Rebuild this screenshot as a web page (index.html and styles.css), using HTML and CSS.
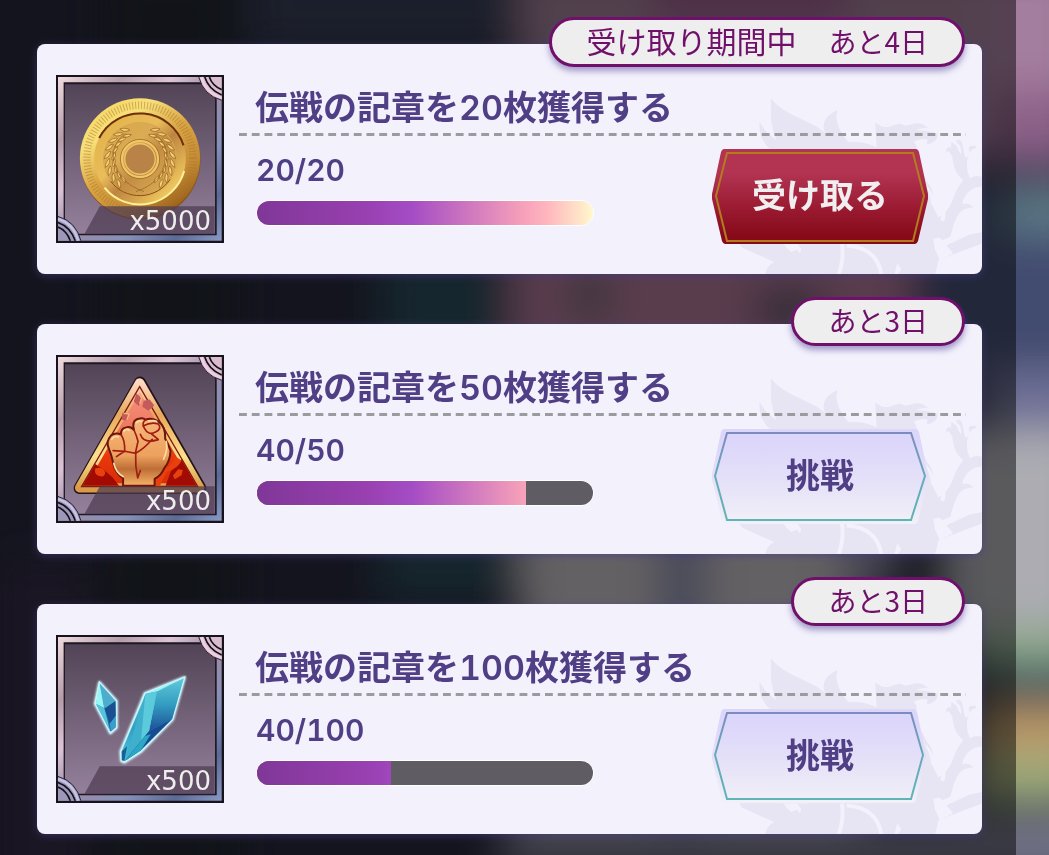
FILE: index.html
```html
<!DOCTYPE html>
<html lang="ja">
<head>
  <meta charset="UTF-8">
  <meta name="viewport" content="width=device-width, initial-scale=1.0">
  <title>ミッション</title>
  <link rel="stylesheet" href="styles.css">
</head>
<body>
  <!-- shared drawings -->
  <svg class="defs" width="0" height="0" aria-hidden="true">
    <defs>
      <linearGradient id="tile" x1="0" y1="0" x2="0" y2="1">
        <stop offset="0" stop-color="#524456"/><stop offset="1" stop-color="#94809b"/>
      </linearGradient>
      <linearGradient id="metal" x1="0" y1="0" x2="1" y2="1">
        <stop offset="0" stop-color="#f0dcdf"/><stop offset=".2" stop-color="#b59caa"/><stop offset=".35" stop-color="#dcc4d6"/>
        <stop offset=".5" stop-color="#9d8ba6"/><stop offset=".7" stop-color="#8590b8"/><stop offset=".85" stop-color="#5c6b96"/><stop offset="1" stop-color="#8799c4"/>
      </linearGradient>
      <linearGradient id="gold" x1=".1" y1="0" x2=".8" y2="1">
        <stop offset="0" stop-color="#f6d35c"/><stop offset=".25" stop-color="#f7e07a"/><stop offset=".5" stop-color="#d9a443"/><stop offset=".75" stop-color="#c58c35"/><stop offset="1" stop-color="#8f5514"/>
      </linearGradient>
      <linearGradient id="goldIn" x1="0" y1="0" x2="1" y2="1">
        <stop offset="0" stop-color="#e2b045"/><stop offset=".4" stop-color="#e9bd5b"/><stop offset=".55" stop-color="#bd8440"/><stop offset=".8" stop-color="#e7bc58"/><stop offset="1" stop-color="#fff09a"/>
      </linearGradient>
      <linearGradient id="rim" x1="0" y1="0" x2="0" y2="1">
        <stop offset="0" stop-color="#ffd8c0"/><stop offset=".3" stop-color="#e9a85a"/><stop offset=".7" stop-color="#ffe08c"/><stop offset="1" stop-color="#d99b48"/>
      </linearGradient>
      <linearGradient id="fire" x1="0" y1="0" x2="0" y2="1">
        <stop offset="0" stop-color="#f49a86"/><stop offset=".4" stop-color="#f07a62"/><stop offset=".7" stop-color="#e8380c"/><stop offset="1" stop-color="#d82c08"/>
      </linearGradient>
      <linearGradient id="skin" x1="0" y1="0" x2="0" y2="1">
        <stop offset="0" stop-color="#f7b67c"/><stop offset=".55" stop-color="#eda25e"/><stop offset=".75" stop-color="#bd6e36"/><stop offset="1" stop-color="#f6b468"/>
      </linearGradient>
      <linearGradient id="ice" x1="0" y1="0" x2="0" y2="1">
        <stop offset="0" stop-color="#66d6e4"/><stop offset=".6" stop-color="#319fc4"/><stop offset="1" stop-color="#4cc4d8"/>
      </linearGradient>
      <linearGradient id="deep" x1="0" y1="0" x2="0" y2="1">
        <stop offset="0" stop-color="#5fcadd"/><stop offset=".5" stop-color="#339cc0"/><stop offset="1" stop-color="#1c4e98"/>
      </linearGradient>
      <linearGradient id="red" x1="0" y1="0" x2="0" y2="1">
        <stop offset=".25" stop-color="#b23452"/><stop offset=".6" stop-color="#9c1c34"/><stop offset=".92" stop-color="#860a18"/>
      </linearGradient>
      <linearGradient id="pale" x1="0" y1="0" x2="0" y2="1">
        <stop offset=".15" stop-color="#dcd6fa"/><stop offset=".55" stop-color="#e5e1f8"/><stop offset="1" stop-color="#f2f0f8"/>
      </linearGradient>
      <linearGradient id="edge" x1="0" y1="0" x2="0" y2="1">
        <stop offset="0" stop-color="#7c8cc0"/><stop offset=".5" stop-color="#68aaba"/><stop offset="1" stop-color="#5fb4b4"/>
      </linearGradient>
      <filter id="soft" x="-20%" y="-20%" width="140%" height="140%"><feGaussianBlur stdDeviation="4"/></filter>
      <filter id="haze" x="-30%" y="-30%" width="160%" height="160%"><feGaussianBlur stdDeviation="20"/></filter>
    </defs>

    <symbol id="frame" viewBox="48 46 506 506">
      <path d="M48 46h506v506H48z" fill="#17121b"/>
      <path d="M54 52h493v493H54z" fill="url(#metal)"/>
      <path d="M71 68h461v461H71z" fill="#1d1722"/>
      <path d="M75 74h452v450H75z" fill="url(#tile)"/>
    </symbol>
    <symbol id="corners" viewBox="48 46 506 506">
      <path d="M133 526l47-85h346v85z" fill="#4d3c52" fill-opacity=".72"/>
      <path d="M478 52q14 55 69 70V52z" fill="#d9bccf"/>
      <path d="M486 52q13 48 61 63" fill="none" stroke="#efcfe4" stroke-width="8"/>
      <path d="M478 52q14 55 69 70" fill="none" stroke="#2a2130" stroke-width="3"/>
      <path d="M496 52q12 38 51 54M510 52q8 26 37 38" fill="none" stroke="#151018" stroke-width="5"/>
      <path d="M54 472q54 15 69 73H54z" fill="#9d98ba"/>
      <path d="M54 480q46 13 61 65" fill="none" stroke="#c5c2e4" stroke-width="8"/>
      <path d="M54 472q54 15 69 73" fill="none" stroke="#2a2130" stroke-width="3"/>
      <path d="M54 490q37 13 52 55M54 504q26 11 37 41" fill="none" stroke="#151018" stroke-width="5"/>
    </symbol>

    <symbol id="griffin" viewBox="120 200 726 532">
      <g fill="#e7e5f3">
        <path d="M213 204C240 244 300 262 352 290L376 308C362 284 375 256 411 239C406 270 414 290 424 306C438 330 452 340 460 360H215C190 340 176 320 178 273C190 300 208 314 230 331C212 293 210 250 213 204z"/>
        <path d="M440 336Q490 330 530 352L526 276Q540 292 566 290Q582 284 602 280Q612 290 634 282Q664 272 684 293Q660 292 648 300Q680 300 713 310Q716 336 680 343L684 328Q660 322 642 334Q656 350 646 372L630 374Q662 410 682 456Q700 474 700 502Q692 470 674 462Q690 486 694 520L716 562Q740 550 756 516Q766 480 790 450Q764 430 760 394Q758 374 748 366Q738 358 736 374Q738 346 754 352L754 336Q770 340 776 360L786 374L782 348Q774 340 768 332Q782 322 788 342Q792 366 796 382Q816 376 806 350Q828 342 830 352Q804 360 802 392Q800 430 812 444Q826 434 846 440V470Q826 468 808 484Q790 500 788 522Q806 516 820 532Q790 532 776 552Q760 580 752 620L704 640L706 662L808 614L846 606V640L716 690L706 732H196Q200 706 222 696L125 652Q116 642 122 636L320 640L560 500z"/>
      </g>
      <path d="M426 640q6 50-10 92M440 646q90 6 104 86M723 524q14 24 4 48" fill="none" stroke="#f3f1fc" stroke-width="12"/>
      <path d="M584 732l8-32 12 18-10 14zM250 640l10 14 14 12 16-8 8 12 6-12-12-18zM700 626q6 40 20 64l40-20-40-48z" fill="#f3f1fc"/>
    </symbol>
  </svg>

  <!-- out of focus scenery -->
  <svg class="scene" viewBox="0 0 1049 855" preserveAspectRatio="none" aria-hidden="true">
    <path d="M0 0h1049v855H0z" fill="#26283a"/>
    <g filter="url(#haze)">
      <path d="M100 -40h140v940H100z" fill="#24282e"/>
      <path d="M380 250h140v350H380z" fill="#2b4858"/>
      <path d="M250 -40h280v90H250z" fill="#363c54"/>
      <path d="M0 560h90v340H0z" fill="#302c42"/>
      <path d="M520 -40h560v200H520z" fill="#9c7e94"/>
      <path d="M650 -40h200v70H650z" fill="#965c88"/>
      <path d="M512 220h400v160H512z" fill="#ac7494"/>
      <ellipse cx="590" cy="295" rx="18" ry="30" fill="#58606c"/>
      <ellipse cx="790" cy="310" rx="40" ry="22" fill="#4c5060"/>
      <path d="M910 180h180v200H910z" fill="#424c70"/>
      <path d="M520 500h340v360H520z" fill="#c0bac0"/>
      <path d="M660 480h44v390h-44z" fill="#8288a8"/>
      <path d="M840 500h60v90h-60z" fill="#8884a0"/>
      <path d="M985 -40h100v140H985z" fill="#a47e9e"/>
      <path d="M985 90h100v75H985z" fill="#8c6088"/>
      <path d="M1000 185h90v50h-90z" fill="#5b7884"/>
      <path d="M980 370h110v60H980z" fill="#6e7096"/>
      <path d="M940 430h150v200H940z" fill="#acacb2"/>
      <path d="M960 625h130v40H960z" fill="#8fa888"/>
      <path d="M985 662h110v26H985z" fill="#406c70"/>
      <path d="M975 700h120v55H975z" fill="#b89668"/>
      <path d="M970 755h120v50H970z" fill="#9cac7c"/>
      <path d="M500 818h600v60H500z" fill="#74748a"/>
    </g>
  </svg>

  <main class="panel">
    <article class="card">
      <svg class="crest" aria-hidden="true"><use href="#griffin"/></svg>
      <p class="badge"><span class="period">受け取り期間中</span>あと4日</p>
      <div class="item">
        <svg viewBox="48 46 506 506" role="img" aria-label="コイン">
          <defs>
            <g id="leaf">
              <path d="M301 205c-12-12-20-10-26-12 4 10 12 15 26 14zM301 221c-12-8-20-6-25-3 7 6 15 8 25 4z"/>
            </g>
            <g id="branch">
              <use href="#leaf" transform="rotate(-20 301 298)"/>
              <use href="#leaf" transform="rotate(-34 301 298)"/>
              <use href="#leaf" transform="rotate(-48 301 298)"/>
              <use href="#leaf" transform="rotate(-62 301 298)"/>
              <use href="#leaf" transform="rotate(-76 301 298)"/>
              <use href="#leaf" transform="rotate(-90 301 298)"/>
              <use href="#leaf" transform="rotate(-104 301 298)"/>
              <use href="#leaf" transform="rotate(-118 301 298)"/>
              <use href="#leaf" transform="rotate(-132 301 298)"/>
              <path d="M258 222c-62 40-50 140 55 175" fill="none"/>
            </g>
          </defs>
          <use href="#frame" x="48" y="46" width="506" height="506"/>
          <circle cx="302" cy="301" r="181" fill="#8a5416"/>
          <circle cx="301" cy="297" r="181" fill="url(#gold)"/>
          <circle cx="301" cy="297" r="160" fill="none" stroke="#a9742c" stroke-opacity=".5" stroke-width="22" stroke-dasharray="3 6"/>
          <circle cx="301" cy="298" r="138" fill="url(#goldIn)"/>
          <path d="M178 236a138 138 0 0 1 254 22" fill="none" stroke="#6c2e08" stroke-width="6"/>
          <path d="M434 335a138 138 0 0 1-240 50" fill="none" stroke="#fff19a" stroke-width="6"/>
          <circle cx="301" cy="299" r="110" fill="#c9964b" fill-opacity=".45" stroke="#d9a84e" stroke-width="3"/>
          <path d="M212 365a110 110 0 0 0 180-5" fill="none" stroke="#8a4d16" stroke-width="3"/>
          <g fill="#f3cf74" stroke="#94601f" stroke-width="2">
            <use href="#branch"/>
            <use href="#branch" transform="translate(602) scale(-1 1)"/>
          </g>
          <circle cx="301" cy="299" r="55" fill="none" stroke="#f1c868" stroke-width="7"/>
          <circle cx="301" cy="299" r="59" fill="none" stroke="#8f5a20" stroke-width="2"/>
          <circle cx="301" cy="299" r="46" fill="#b98348" stroke="#f0c566" stroke-width="4"/>
          <use href="#corners" x="48" y="46" width="506" height="506"/>
        </svg>
        <span class="amount">x5000</span>
      </div>
      <div class="body">
        <h2>伝戦の記章を20枚獲得する</h2>
        <div class="row">
          <div class="status">
            <label for="p1">20/20</label>
            <progress id="p1" value="20" max="20"></progress>
          </div>
          <button type="button" class="claim">
            <svg viewBox="0 0 216 95" preserveAspectRatio="none" aria-hidden="true">
              <path d="M12 0h192q2 0 3 3l9 42v5l-10 42q-1 3-3 3H13q-2 0-3-3L0 50v-5L9 3q1-3 3-3z" fill="url(#red)"/>
              <path d="M15 4h186l11 43-11 45H15L4 47z" fill="none" stroke="#b47a20" stroke-width="2"/>
            </svg>
            <span>受け取る</span>
          </button>
        </div>
      </div>
    </article>

    <article class="card">
      <svg class="crest" aria-hidden="true"><use href="#griffin"/></svg>
      <p class="badge">あと3日</p>
      <div class="item">
        <svg viewBox="48 46 506 506" role="img" aria-label="拳の記章">
          <use href="#frame" x="48" y="46" width="506" height="506"/>
          <path d="M301 129L119 447H483z" fill="#25131a" stroke="#25131a" stroke-width="36" stroke-linejoin="round"/>
          <path d="M300 130L119 446H481z" fill="url(#fire)" stroke="url(#rim)" stroke-width="28" stroke-linejoin="round"/>
          <path d="M300 141L125 442H475z" fill="none" stroke="#7d1a12" stroke-width="4"/>
          <path d="M128 440l38-66q30 18 52 40l20 26zM472 440l-46-80q-18 16-32 36l-16 44z" fill="#a20a04"/>
          <path d="M166 388q20-8 30 10 0 20-20 12-14-4-10-22zM400 410l16-20 14 2-4 16-20 12zM346 400q50-10 62-48l18 12q-10 24-44 34l-22 44h-14z" fill="#e8410e"/>
          <path d="M290 162l14 12-6 26-16-14zM312 184l18-4 14 18-18 16-18-12zM248 220l20 4-10 20-12-4z" fill="#c55a5c"/>
          <path d="M298 162l8 14-6 16M252 222l16 2-6 16" fill="none" stroke="#f6b57c" stroke-width="4"/>
          <path d="M250 440v-22q-25-18-30-48-5-24-12-40-12-22 6-42 14-10 30-2-2-18 15-22 14-4 24 8-8-30 14-34 14-4 20 3 20-8 38 4 24 16 22 54 10 16 16 36-2 32-18 50-10 24-30 34v21z" fill="url(#skin)" stroke="#6d160d" stroke-width="6" stroke-linejoin="round"/>
          <path d="M244 286q12 16 11 50l-35-2M283 272q8 18 12 34l-8 36-32-6M288 342q-2 38 6 74M320 240q-16 10-6 26M314 266q12 24 34 12 20-10 8-24-20-8-46 6M302 285q10 30 54 16M356 300l-20-16M288 342q26-14 50-42M294 416l8-22M230 352q14-10 26-16" fill="none" stroke="#9f1d12" stroke-width="5" stroke-linecap="round"/>
          <path d="M216 300q8-12 20-7M252 276q8-10 16-3M290 250q8-8 16-4M222 372q6 28 28 40M380 306q6 24-8 54M327 245q16-4 24 1" fill="none" stroke="#ffdca0" stroke-width="5" stroke-linecap="round"/>
          <use href="#corners" x="48" y="46" width="506" height="506"/>
        </svg>
        <span class="amount">x500</span>
      </div>
      <div class="body">
        <h2>伝戦の記章を50枚獲得する</h2>
        <div class="row">
          <div class="status">
            <label for="p2">40/50</label>
            <progress id="p2" value="40" max="50"></progress>
          </div>
          <button type="button" class="challenge">
            <svg viewBox="0 0 216 95" preserveAspectRatio="none" aria-hidden="true">
              <path d="M12 0h192q2 0 3 3l9 42v5l-10 42q-1 3-3 3H13q-2 0-3-3L0 50v-5L9 3q1-3 3-3z" fill="url(#pale)"/>
              <path d="M15 4h184l14 43-14 44H15L3 47z" fill="none" stroke="url(#edge)" stroke-width="2"/>
            </svg>
            <span>挑戦</span>
          </button>
        </div>
      </div>
    </article>

    <article class="card">
      <svg class="crest" aria-hidden="true"><use href="#griffin"/></svg>
      <p class="badge">あと3日</p>
      <div class="item">
        <svg viewBox="48 46 506 506" role="img" aria-label="結晶">
          <use href="#frame" x="48" y="46" width="506" height="506"/>
          <path d="M179 189l51 56v80l-18 16-46-88zM435 174L399 300l-95 97-50 32-9-4-2-28 73-175z" fill="#d4f5ff" stroke="#d4f5ff" stroke-width="9" stroke-linejoin="round" filter="url(#soft)"/>
          <path d="M179 189l51 56v80l-18 16-46-88z" fill="url(#deep)" stroke="#c9f4fa" stroke-width="5"/>
          <path d="M179 191l14 75-25-13z" fill="#9af6f4"/>
          <path d="M168 254l26 14 18 70z" fill="#55c5dc"/>
          <path d="M194 268l33-23 1 44-18 24z" fill="#1a4f91"/>
          <path d="M180 192l14 74 33-22z" fill="#4cadcc"/>
          <path d="M210 313l18-24v34l-15 14z" fill="#3a9fc8"/>
          <path d="M435 174L399 300l-95 97-50 32-9-4-2-28 73-175z" fill="url(#ice)" stroke="#c9f4fa" stroke-width="5"/>
          <path d="M433 176l-81 40-24 120 70-37z" fill="url(#deep)"/>
          <path d="M433 175l-115 48 34-7z" fill="#a0f2f4"/>
          <path d="M317 224l35-8-24 120-74 90z" fill="#3eafcc"/>
          <path d="M317 224l35-8-24 120-24 28z" fill="#5bcbdc"/>
          <path d="M328 336l70-37-96 95-46 31z" fill="#184a92"/>
          <path d="M316 350l18-6-30 49-46 30z" fill="#2ba6c4"/>
          <path d="M246 397l16-16-8 44-8-2z" fill="#175f94"/>
          <use href="#corners" x="48" y="46" width="506" height="506"/>
        </svg>
        <span class="amount">x500</span>
      </div>
      <div class="body">
        <h2>伝戦の記章を100枚獲得する</h2>
        <div class="row">
          <div class="status">
            <label for="p3">40/100</label>
            <progress id="p3" value="40" max="100"></progress>
          </div>
          <button type="button" class="challenge">
            <svg viewBox="0 0 216 95" preserveAspectRatio="none" aria-hidden="true">
              <path d="M12 0h190q2 0 3 3l9 42v5l-10 41q-1 3-3 3H13q-2 0-3-3L0 50v-5L9 3q1-3 3-3z" fill="url(#pale)"/>
              <path d="M15 4h184l12 42-12 44H15L3 46z" fill="none" stroke="url(#edge)" stroke-width="2"/>
            </svg>
            <span>挑戦</span>
          </button>
        </div>
      </div>
    </article>
  </main>
</body>
</html>
```
FILE: styles.css
```css
* { box-sizing: border-box; }
body { margin: 0; min-height: 100vh; background: #24262f; color: #503f85; font-family: Inter, "Noto Sans CJK JP", sans-serif; font-variant-numeric: tabular-nums; }
.defs { position: absolute; }
.scene { position: fixed; inset: 0; width: 100%; height: 100%; }

.panel { position: relative; display: flex; flex-direction: column; gap: 50px; min-height: 100vh; margin-right: 33px; padding: 44px 34px 21px 37px; background: rgba(0, 0, 0, 0.48); }

.card { position: relative; display: flex; gap: 15px; padding: 31px 16px 30px 19px; background: #f3f1fc; border-radius: 8px; box-shadow: 0 2px 8px rgba(72, 60, 130, 0.6); }
.crest { position: absolute; right: 0; bottom: 0; width: 242px; height: 177px; border-radius: 0 0 8px 0; }

.badge { position: absolute; top: -27px; right: 17px; margin: 0; padding: 0 34px 2px; border: 3px solid #70106a; border-radius: 25px; background: #eee; color: #70106a; font-family: "Noto Sans CJK JP", sans-serif; font-size: 28px; line-height: 41px; white-space: nowrap; box-shadow: 0 4px 6px rgba(80, 66, 150, 0.5); }
.period { margin-right: 32px; font-size: 30px; }

.item { position: relative; flex: none; width: 168px; height: 168px; }
.item svg { display: block; width: 100%; height: 100%; }
.amount { position: absolute; right: 13px; bottom: 6px; color: #eee; font-family: "DejaVu Sans", sans-serif; font-size: 26px; line-height: 32px; }

.body { position: relative; flex: 1; min-width: 0; }
h2 { margin: 0; padding: 11px 0 2px 16px; font-size: 34px; font-weight: 600; line-height: 44px; }
h2::after { content: ""; position: absolute; left: 0; right: 0; top: 58px; height: 3px; background: linear-gradient(90deg, #9b9a9e 60%, transparent 60%) 0 0 / calc(100% / 57) 100%; }

.row { display: flex; justify-content: space-between; align-items: flex-start; padding: 17px 38px 0 17px; }
.status { width: 338px; }
label { display: block; font-size: 30px; font-weight: 600; line-height: 42px; }

progress { appearance: none; display: block; width: 100%; height: 26px; margin-top: 9px; border: 1px solid #fff; border-radius: 13px; overflow: hidden; background: #605c64; }
progress::-webkit-progress-bar { background: #605c64; }
progress::-webkit-progress-value { background: linear-gradient(90deg, #803798, #9840b0 32%, #a44cc4 46%, #f6a0ba 79%, #ffb4be 86%, #fff8cc) 0 0 / 336px 100%; }

button { position: relative; width: 216px; height: 95px; margin: 0; padding: 0 0 6px; border: 0; background: none; font: 700 34px/48px "Noto Sans CJK JP", sans-serif; cursor: pointer; }
button svg { position: absolute; inset: 0; width: 100%; height: 100%; }
button span { position: relative; }
.claim { color: #f1eef0; }
.challenge { color: #503f85; }
```
